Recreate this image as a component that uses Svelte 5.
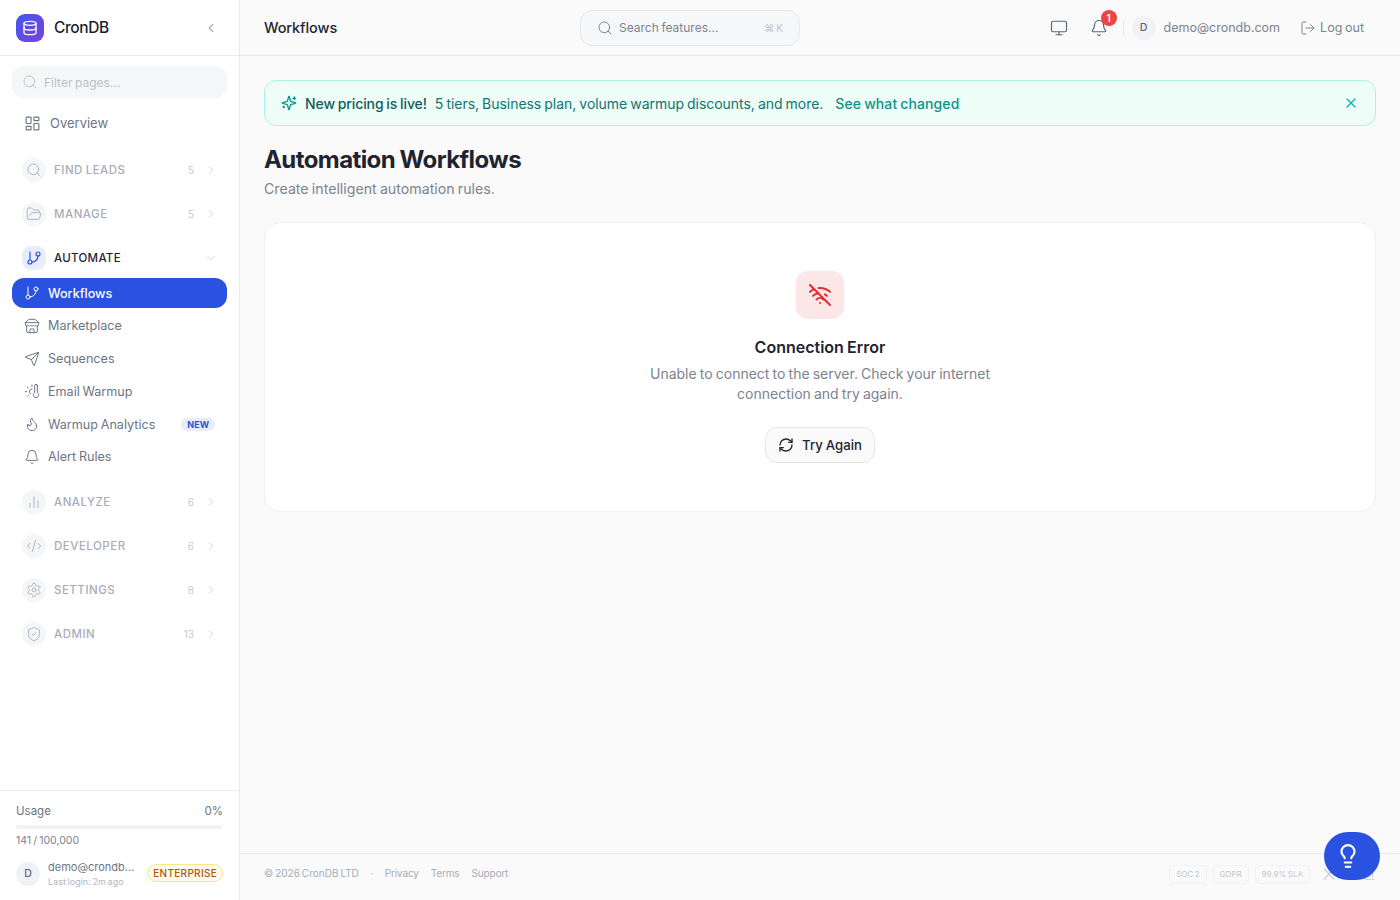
<script>
  const icons = {
    database: '<ellipse cx="12" cy="5" rx="9" ry="3"/><path d="M3 5V19A9 3 0 0 0 21 19V5"/><path d="M3 12A9 3 0 0 0 21 12"/>',
    chevronLeft: '<path d="m15 18-6-6 6-6"/>',
    chevronRight: '<path d="m9 18 6-6-6-6"/>',
    chevronDown: '<path d="m6 9 6 6 6-6"/>',
    search: '<path d="m21 21-4.34-4.34"/><circle cx="11" cy="11" r="8"/>',
    dashboard: '<rect width="7" height="9" x="3" y="3" rx="1"/><rect width="7" height="5" x="14" y="3" rx="1"/><rect width="7" height="9" x="14" y="12" rx="1"/><rect width="7" height="5" x="3" y="16" rx="1"/>',
    folder: '<path d="m6 14 1.5-2.9A2 2 0 0 1 9.24 10H20a2 2 0 0 1 1.94 2.5l-1.54 6a2 2 0 0 1-1.95 1.5H4a2 2 0 0 1-2-2V5a2 2 0 0 1 2-2h3.9a2 2 0 0 1 1.69.9l.81 1.2a2 2 0 0 0 1.67.9H18a2 2 0 0 1 2 2v2"/>',
    branch: '<line x1="6" x2="6" y1="3" y2="15"/><circle cx="18" cy="6" r="3"/><circle cx="6" cy="18" r="3"/><path d="M18 9a9 9 0 0 1-9 9"/>',
    store: '<path d="m2 7 4.41-4.41A2 2 0 0 1 7.83 2h8.34a2 2 0 0 1 1.42.59L22 7"/><path d="M4 12v8a2 2 0 0 0 2 2h12a2 2 0 0 0 2-2v-8"/><path d="M15 22v-4a2 2 0 0 0-2-2h-2a2 2 0 0 0-2 2v4"/><path d="M2 7h20"/><path d="M22 7v3a2 2 0 0 1-2 2a2.7 2.7 0 0 1-1.59-.63.7.7 0 0 0-.82 0A2.7 2.7 0 0 1 16 12a2.7 2.7 0 0 1-1.59-.63.7.7 0 0 0-.82 0A2.7 2.7 0 0 1 12 12a2.7 2.7 0 0 1-1.59-.63.7.7 0 0 0-.82 0A2.7 2.7 0 0 1 8 12a2.7 2.7 0 0 1-1.59-.63.7.7 0 0 0-.82 0A2.7 2.7 0 0 1 4 12a2 2 0 0 1-2-2V7"/>',
    send: '<path d="M14.536 21.686a.5.5 0 0 0 .937-.024l6.5-19a.496.496 0 0 0-.635-.635l-19 6.5a.5.5 0 0 0-.024.937l7.93 3.18a2 2 0 0 1 1.112 1.11z"/><path d="m21.854 2.147-10.94 10.939"/>',
    thermo: '<path d="M12 9a4 4 0 0 0-2 7.5"/><path d="M12 3v2"/><path d="m6.6 18.4-1.4 1.4"/><path d="M20 4v10.54a4 4 0 1 1-4 0V4a2 2 0 0 1 4 0Z"/><path d="M4 13H2"/><path d="M6.34 7.34 4.93 5.93"/>',
    flame: '<path d="M8.5 14.5A2.5 2.5 0 0 0 11 12c0-1.38-.5-2-1-3-1.072-2.143-.224-4.054 2-6 .5 2.5 2 4.9 4 6.5 2 1.6 3 3.5 3 5.5a7 7 0 1 1-14 0c0-1.153.433-2.294 1-3a2.5 2.5 0 0 0 2.5 2.5z"/>',
    bell: '<path d="M10.268 21a2 2 0 0 0 3.464 0"/><path d="M3.262 15.326A1 1 0 0 0 4 17h16a1 1 0 0 0 .74-1.673C19.41 13.956 18 12.499 18 8A6 6 0 0 0 6 8c0 4.499-1.411 5.956-2.738 7.326"/>',
    chart: '<line x1="18" x2="18" y1="20" y2="10"/><line x1="12" x2="12" y1="20" y2="4"/><line x1="6" x2="6" y1="20" y2="14"/>',
    chartAxis: '<path d="M3 3v16a2 2 0 0 0 2 2h16"/><path d="M18 17V9"/><path d="M13 17V5"/><path d="M8 17v-3"/>',
    code: '<path d="m18 16 4-4-4-4"/><path d="m6 8-4 4 4 4"/><path d="m14.5 4-5 16"/>',
    settings: '<path d="M12.22 2h-.44a2 2 0 0 0-2 2v.18a2 2 0 0 1-1 1.73l-.43.25a2 2 0 0 1-2 0l-.15-.08a2 2 0 0 0-2.73.73l-.22.38a2 2 0 0 0 .73 2.73l.15.1a2 2 0 0 1 1 1.72v.51a2 2 0 0 1-1 1.74l-.15.09a2 2 0 0 0-.73 2.73l.22.38a2 2 0 0 0 2.73.73l.15-.08a2 2 0 0 1 2 0l.43.25a2 2 0 0 1 1 1.73V20a2 2 0 0 0 2 2h.44a2 2 0 0 0 2-2v-.18a2 2 0 0 1 1-1.73l.43-.25a2 2 0 0 1 2 0l.15.08a2 2 0 0 0 2.73-.73l.22-.39a2 2 0 0 0-.73-2.73l-.15-.08a2 2 0 0 1-1-1.74v-.5a2 2 0 0 1 1-1.74l.15-.09a2 2 0 0 0 .73-2.73l-.22-.38a2 2 0 0 0-2.73-.73l-.15.08a2 2 0 0 1-2 0l-.43-.25a2 2 0 0 1-1-1.73V4a2 2 0 0 0-2-2z"/><circle cx="12" cy="12" r="3"/>',
    shield: '<path d="M20 13c0 5-3.5 7.5-7.66 8.95a1 1 0 0 1-.67-.01C7.5 20.5 4 18 4 13V6a1 1 0 0 1 1-1c2 0 4.5-1.2 6.24-2.72a1.17 1.17 0 0 1 1.52 0C14.51 3.81 17 5 19 5a1 1 0 0 1 1 1z"/><path d="m9 12 2 2 4-4"/>',
    monitor: '<rect width="20" height="14" x="2" y="3" rx="2"/><line x1="8" x2="16" y1="21" y2="21"/><line x1="12" x2="12" y1="17" y2="21"/>',
    logout: '<path d="m16 17 5-5-5-5"/><path d="M21 12H9"/><path d="M9 21H5a2 2 0 0 1-2-2V5a2 2 0 0 1 2-2h4"/>',
    sparkles: '<path d="M9.937 15.5A2 2 0 0 0 8.5 14.063l-6.135-1.582a.5.5 0 0 1 0-.962L8.5 9.936A2 2 0 0 0 9.937 8.5l1.582-6.135a.5.5 0 0 1 .963 0L14.063 8.5A2 2 0 0 0 15.5 9.937l6.135 1.581a.5.5 0 0 1 0 .964L15.5 14.063a2 2 0 0 0-1.437 1.437l-1.582 6.135a.5.5 0 0 1-.963 0z"/><path d="M20 3v4"/><path d="M22 5h-4"/><path d="M4 17v2"/><path d="M5 18H3"/>',
    wifiOff: '<path d="M12 20h.01"/><path d="M8.5 16.429a5 5 0 0 1 7 0"/><path d="M5 12.859a10 10 0 0 1 5.17-2.69"/><path d="M19 12.859a10 10 0 0 0-2.007-1.523"/><path d="M2 8.82a15 15 0 0 1 4.177-2.643"/><path d="M22 8.82a15 15 0 0 0-11.288-3.764"/><path d="m2 2 20 20"/>',
    refresh: '<path d="M3 12a9 9 0 0 1 9-9 9.75 9.75 0 0 1 6.74 2.74L21 8"/><path d="M21 3v5h-5"/><path d="M21 12a9 9 0 0 1-9 9 9.75 9.75 0 0 1-6.74-2.74L3 16"/><path d="M8 16H3v5"/>',
    x: '<path d="M18 6 6 18"/><path d="m6 6 12 12"/>',
    xBrand: '<path d="M4 3 20 21"/><path d="M20 3 4 21"/>',
    bulb: '<path d="M15 14c.2-1 .7-1.7 1.5-2.5 1-.9 1.5-2.2 1.5-3.5A6 6 0 0 0 6 8c0 1 .2 2.2 1.5 3.5.7.7 1.3 1.5 1.5 2.5"/><path d="M9 18h6"/><path d="M10 22h4"/>',
  };

  const before = [
    { label: "FIND LEADS", icon: "search", count: 5 },
    { label: "MANAGE", icon: "folder", count: 5 },
  ];
  const after = [
    { label: "ANALYZE", icon: "chart", count: 6 },
    { label: "DEVELOPER", icon: "code", count: 6 },
    { label: "SETTINGS", icon: "settings", count: 8 },
    { label: "ADMIN", icon: "shield", count: 13 },
  ];
  const automate = [
    { label: "Workflows", icon: "branch", active: true },
    { label: "Marketplace", icon: "store" },
    { label: "Sequences", icon: "send" },
    { label: "Email Warmup", icon: "thermo" },
    { label: "Warmup Analytics", icon: "flame", badge: "NEW" },
    { label: "Alert Rules", icon: "bell" },
  ];
</script>

{#snippet icon(name, size = 16, sw = 2)}
  <svg class="ic" width={size} height={size} viewBox="0 0 24 24" fill="none" stroke="currentColor" stroke-width={sw} stroke-linecap="round" stroke-linejoin="round">{@html icons[name]}</svg>
{/snippet}

{#snippet group(g)}
  <div class="group">
    <span class="group-ic">{@render icon(g.icon, 16, 1.5)}</span>
    <span class="group-label">{g.label}</span>
    <span class="group-count">{g.count}</span>
    <span class="group-chev">{@render icon("chevronRight", 14, 1.5)}</span>
  </div>
{/snippet}

<div class="shell">
  <aside class="sidebar">
    <div class="brand">
      <span class="logo">{@render icon("database", 16, 2)}</span>
      <span class="brand-name">CronDB</span>
      <span class="collapse">{@render icon("chevronLeft", 14, 2)}</span>
    </div>

    <nav class="nav">
      <div class="filter">
        {@render icon("search", 16, 1.5)}
        <span>Filter pages...</span>
      </div>
      <div class="overview">
        {@render icon("dashboard", 17, 1.6)}
        <span>Overview</span>
      </div>

      <div class="groups">
        {#each before as g}
          {@render group(g)}
        {/each}

        <div class="group open">
          <span class="group-ic">{@render icon("branch", 16, 1.75)}</span>
          <span class="group-label">AUTOMATE</span>
          <span class="group-chev">{@render icon("chevronDown", 14, 1.5)}</span>
        </div>
      </div>

      <ul class="items">
        {#each automate as item}
          <li class:active={item.active}>
            {@render icon(item.icon, 16, 1.5)}
            <span class="item-label">{item.label}</span>
            {#if item.badge}<span class="new">{item.badge}</span>{/if}
          </li>
        {/each}
      </ul>

      <div class="groups lower">
        {#each after as g}
          {@render group(g)}
        {/each}
      </div>
    </nav>

    <div class="usage">
      <div class="usage-top"><span>Usage</span><span>0%</span></div>
      <div class="bar"></div>
      <div class="usage-count">141 / 100,000</div>
      <div class="user">
        <span class="avatar">D</span>
        <div class="user-text">
          <div class="user-mail">demo@crondb...</div>
          <div class="user-login">Last login: 2m ago</div>
        </div>
        <span class="plan">ENTERPRISE</span>
      </div>
    </div>
  </aside>

  <div class="main">
    <header class="topbar">
      <div class="page-title">Workflows</div>
      <div class="search">
        {@render icon("search", 16, 1.5)}
        <span class="search-text">Search features...</span>
        <span class="kbd">⌘ K</span>
      </div>
      <div class="actions">
        <span class="tool">{@render icon("monitor", 18, 1.6)}</span>
        <span class="tool bell">
          {@render icon("bell", 18, 1.6)}
          <span class="dot">1</span>
        </span>
        <span class="sep"></span>
        <span class="avatar">D</span>
        <span class="mail">demo@crondb.com</span>
        <span class="logout">{@render icon("logout", 16, 1.5)} Log out</span>
      </div>
    </header>

    <main class="content">
      <div class="banner">
        <span class="banner-ic">{@render icon("sparkles", 16, 2)}</span>
        <strong>New pricing is live!</strong>
        <span class="banner-text">5 tiers, Business plan, volume warmup discounts, and more.</span>
        <span class="banner-link">See what changed</span>
        <span class="banner-x">{@render icon("x", 16, 2)}</span>
      </div>

      <h1>Automation Workflows</h1>
      <p class="sub">Create intelligent automation rules.</p>

      <section class="card">
        <span class="err-ic">{@render icon("wifiOff", 24, 2)}</span>
        <h2>Connection Error</h2>
        <p>Unable to connect to the server. Check your internet connection and try again.</p>
        <button>{@render icon("refresh", 16, 2)} Try Again</button>
      </section>
    </main>

    <footer class="footer">
      <span>© 2026 CronDB LTD</span>
      <span class="mid">·</span>
      <span class="link">Privacy</span>
      <span class="link">Terms</span>
      <span class="link">Support</span>
      <div class="badges">
        <span class="chip">SOC 2</span>
        <span class="chip">GDPR</span>
        <span class="chip">99.9% SLA</span>
        <span class="foot-icons">
          {@render icon("xBrand", 14, 2)}
          {@render icon("code", 14, 2)}
          {@render icon("chartAxis", 14, 2)}
        </span>
      </div>
    </footer>
  </div>

  <button class="fab">{@render icon("bulb", 26, 2)}</button>
</div>

<style>
  :global(body) {
    margin: 0;
    font-family: Inter, "Liberation Sans", sans-serif;
    word-spacing: -0.05em;
    color: #1f2430;
  }

  .shell {
    display: flex;
    height: 900px;
    overflow: hidden;
    background: #fafafa;
  }

  .ic {
    display: block;
    flex: none;
  }

  .sidebar {
    width: 240px;
    flex: none;
    box-sizing: border-box;
    display: flex;
    flex-direction: column;
    background: #fff;
    border-right: 1px solid #e8e9ec;
  }

  .brand {
    height: 56px;
    box-sizing: border-box;
    display: flex;
    align-items: center;
    padding: 0 16px;
    border-bottom: 1px solid #e8e9ec;
  }

  .logo {
    width: 28px;
    height: 28px;
    border-radius: 9px;
    display: flex;
    align-items: center;
    justify-content: center;
    color: #fff;
    background: linear-gradient(135deg, #3f5be8, #7c3fe0);
  }

  .brand-name {
    margin-left: 10px;
    font-size: 15.5px;
    font-weight: 500;
    letter-spacing: -0.4px;
    color: #1a1f2b;
  }

  .collapse {
    margin-left: auto;
    margin-right: 5px;
    color: #a3a8b3;
  }

  .nav {
    flex: 1;
    padding: 10px 12px 0;
  }

  .filter {
    height: 32px;
    display: flex;
    align-items: center;
    gap: 6px;
    padding: 0 10px;
    border-radius: 12px;
    background: #f5f6f8;
    color: #bdc0c8;
    font-size: 12px;
  }

  .overview {
    height: 32px;
    margin-top: 9px;
    display: flex;
    align-items: center;
    gap: 9px;
    padding-left: 12px;
    color: #6d7585;
    font-size: 13px;
  }

  .groups {
    margin-top: 19px;
    display: flex;
    flex-direction: column;
    gap: 20px;
  }

  .group {
    height: 24px;
    display: flex;
    align-items: center;
    padding: 0 9px 0 10px;
    color: #a8adb8;
  }

  .group-ic {
    width: 24px;
    height: 24px;
    border-radius: 50%;
    display: flex;
    align-items: center;
    justify-content: center;
    background: #f5f6f8;
    color: #afb3bd;
  }

  .group-label {
    margin-left: 8px;
    font-size: 11.5px;
    font-weight: 500;
    letter-spacing: 0.5px;
  }

  .group-count {
    margin-left: auto;
    font-size: 10px;
    color: #c8cbd2;
  }

  .group-chev {
    margin-left: 10px;
    color: #d0d3d9;
  }

  .open .group-ic {
    border-radius: 9px;
    background: #e9edfb;
    color: #2a52e0;
  }

  .open .group-label {
    letter-spacing: 0.3px;
    color: #1f2430;
  }

  .open .group-chev {
    margin-left: auto;
  }

  .items {
    list-style: none;
    margin: 8px 0 0;
    padding: 0;
    display: flex;
    flex-direction: column;
    gap: 2.75px;
  }

  .items li {
    height: 30px;
    display: flex;
    align-items: center;
    gap: 8px;
    padding: 0 12px;
    border-radius: 12px;
    font-size: 12.6px;
    color: #6d7585;
  }

  .items li.active {
    background: #2a52e0;
    color: #fff;
    font-weight: 500;
  }

  .new {
    margin-left: auto;
    padding: 0 6px;
    height: 13px;
    line-height: 13px;
    border-radius: 7px;
    background: #e9edfb;
    color: #2a52e0;
    font-size: 9px;
    font-weight: 700;
  }

  .lower {
    margin-top: 18px;
  }

  .usage {
    border-top: 1px solid #ececef;
    padding: 13px 16px 13px;
  }

  .usage-top {
    display: flex;
    justify-content: space-between;
    font-size: 11.5px;
    color: #6d7585;
  }

  .bar {
    height: 4px;
    margin-top: 7px;
    border-radius: 2px;
    background: #f1f2f4;
  }

  .usage-count {
    margin-top: 5px;
    font-size: 10.5px;
    color: #7c8290;
  }

  .user {
    margin-top: 13px;
    display: flex;
    align-items: center;
  }

  .avatar {
    width: 24px;
    height: 24px;
    flex: none;
    border-radius: 50%;
    display: flex;
    align-items: center;
    justify-content: center;
    background: #f1f2f5;
    color: #5f6675;
    font-size: 10.5px;
    font-weight: 500;
  }

  .user-text {
    margin-left: 8px;
  }

  .user-mail {
    font-size: 11px;
    color: #6d7585;
    white-space: nowrap;
  }

  .user-login {
    margin-top: 2px;
    font-size: 9px;
    color: #b3b7c1;
    white-space: nowrap;
  }

  .plan {
    margin-left: auto;
    margin-bottom: 1px;
    padding: 2px 5px;
    border: 1px solid #fde68a;
    border-radius: 10px;
    background: #fffbeb;
    color: #b45309;
    font-size: 10px;
    font-weight: 500;
    letter-spacing: 0.3px;
  }

  .main {
    flex: 1;
    min-width: 0;
    display: flex;
    flex-direction: column;
  }

  .topbar {
    height: 56px;
    box-sizing: border-box;
    display: flex;
    align-items: center;
    padding: 0 24px;
    border-bottom: 1px solid #e8e9ec;
  }

  .page-title {
    width: 316px;
    font-size: 14.5px;
    font-weight: 500;
    letter-spacing: -0.1px;
    color: #1f2430;
  }

  .search {
    width: 220px;
    height: 36px;
    box-sizing: border-box;
    display: flex;
    align-items: center;
    gap: 6px;
    padding: 0 16px;
    border: 1px solid #e5e7eb;
    border-radius: 12px;
    background: #f6f7f9;
    color: #7d8390;
  }

  .search-text {
    font-size: 12px;
  }

  .kbd {
    margin-left: auto;
    font-size: 10px;
    color: #c0c3cb;
  }

  .actions {
    margin-left: auto;
    display: flex;
    align-items: center;
    color: #667085;
  }

  .tool {
    width: 18px;
    height: 18px;
    position: relative;
    color: #5f6675;
  }

  .bell {
    margin-left: 22px;
  }

  .dot {
    position: absolute;
    top: -9px;
    left: 11px;
    width: 16px;
    height: 16px;
    border-radius: 50%;
    background: #ef4444;
    color: #fff;
    font-size: 10px;
    font-weight: 600;
    line-height: 16px;
    text-align: center;
  }

  .sep {
    width: 1px;
    height: 16px;
    margin: 0 8px 0 15px;
    background: #e8e9ec;
  }

  .mail {
    margin-left: 8px;
    font-size: 12.5px;
    color: #7d8390;
  }

  .logout {
    margin: 0 12px 0 20px;
    display: flex;
    align-items: center;
    gap: 4px;
    font-size: 12.5px;
    color: #7d8390;
  }

  .content {
    flex: 1;
    padding: 24px;
  }

  .banner {
    height: 46px;
    box-sizing: border-box;
    display: flex;
    align-items: center;
    padding: 0 16px;
    border: 1px solid #a7f3e4;
    border-radius: 12px;
    background: #effdf9;
    font-size: 14px;
  }

  .banner-ic {
    color: #0d9488;
  }

  .banner strong {
    margin-left: 8px;
    font-weight: 500;
    letter-spacing: -0.1px;
    color: #115e59;
  }

  .banner-text {
    margin-left: 8px;
    letter-spacing: -0.04px;
    color: #0f766e;
  }

  .banner-link {
    margin-left: 12px;
    color: #0d9488;
    font-weight: 500;
    letter-spacing: 0.1px;
  }

  .banner-x {
    margin-left: auto;
    color: #14b8a6;
  }

  h1 {
    margin: 19px 0 0;
    font-size: 24px;
    line-height: 30px;
    font-weight: 700;
    letter-spacing: -0.58px;
    color: #1f2430;
  }

  .sub {
    margin: 4px 0 0;
    font-size: 14.2px;
    line-height: 20px;
    color: #7d8390;
  }

  .card {
    margin-top: 23px;
    height: 290px;
    box-sizing: border-box;
    display: flex;
    flex-direction: column;
    align-items: center;
    padding-top: 48px;
    border: 1px solid #eeeff1;
    border-radius: 16px;
    background: #fff;
  }

  .err-ic {
    width: 48px;
    height: 48px;
    border-radius: 12px;
    display: flex;
    align-items: center;
    justify-content: center;
    background: #fbe7e7;
    color: #e02d2d;
  }

  .card h2 {
    margin: 17px 0 0;
    font-size: 16px;
    line-height: 22px;
    font-weight: 600;
    color: #1f2430;
  }

  .card p {
    width: 360px;
    margin: 6px 0 0;
    font-size: 14px;
    line-height: 20px;
    text-align: center;
    color: #7d8390;
  }

  .card button {
    margin-top: 23px;
    height: 36px;
    padding: 0 12px;
    display: flex;
    align-items: center;
    gap: 8px;
    border: 1px solid #e5e7eb;
    border-radius: 12px;
    background: #fafafa;
    color: #1f2430;
    font: 500 13.2px Inter, "Liberation Sans", sans-serif;
    word-spacing: -0.05em;
  }

  .footer {
    height: 47px;
    box-sizing: border-box;
    display: flex;
    align-items: center;
    gap: 12px;
    padding: 0 24px 8px;
    border-top: 1px solid #e8e9ec;
    font-size: 10px;
    color: #a6abb6;
  }

  .mid {
    margin-right: -1px;
    color: #c8cbd2;
  }

  .link {
    letter-spacing: -0.15px;
  }

  .badges {
    margin-left: auto;
    margin-top: 2px;
    display: flex;
    align-items: center;
    gap: 6px;
  }

  .chip {
    height: 17px;
    line-height: 17px;
    padding: 0 6px;
    border: 1px solid #f0f1f3;
    border-radius: 5px;
    font-size: 8px;
    color: #c3c6cd;
  }

  .foot-icons {
    margin-left: 6px;
    display: flex;
    gap: 6px;
    color: #c9ccd3;
  }

  .fab {
    position: fixed;
    right: 20px;
    bottom: 20px;
    width: 56px;
    height: 48px;
    padding: 0 8px 0 0;
    border: 0;
    border-radius: 24px;
    display: flex;
    align-items: center;
    justify-content: center;
    background: #2a52e0;
    color: #fff;
  }
</style>
